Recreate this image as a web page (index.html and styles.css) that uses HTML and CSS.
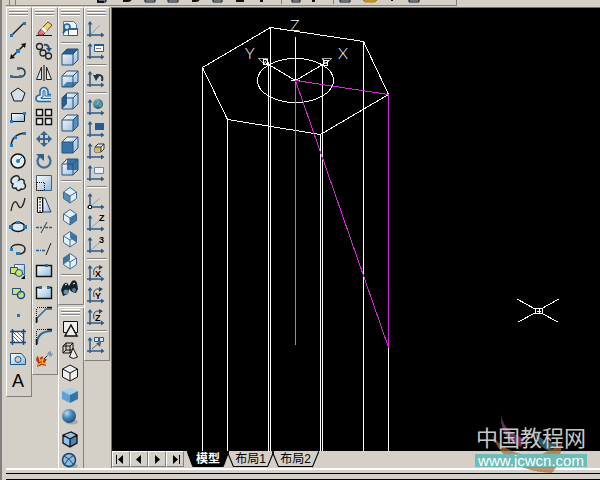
FILE: index.html
```html
<!DOCTYPE html>
<html lang="zh-CN">
<head>
<meta charset="utf-8">
<title>CAD</title>
<link rel="stylesheet" href="styles.css">
</head>
<body>
<svg class="defs" aria-hidden="true">
<defs>
<linearGradient id="glass" x1="0" y1="0" x2="1" y2="1"><stop offset="0" stop-color="#fff"/><stop offset="1" stop-color="#8fb8dc"/></linearGradient>
<radialGradient id="ball" cx=".35" cy=".3" r=".75"><stop offset="0" stop-color="#b8dcf4"/><stop offset=".45" stop-color="#4a8cc0"/><stop offset="1" stop-color="#1c4a7c"/></radialGradient>
<g id="axes"><path d="M5 4v15M2 17h16" stroke="#2c5a88" stroke-width="1.5" fill="none"/><path d="M2.500 6.500 5 3l2.500 3.500zM16 14.500l3.500 2.500-3.500 2.500z" fill="#2c5a88"/></g>
<g id="cube"><path d="M3 8 8 3h11v11l-5 5H3z" fill="url(#glass)"/></g>
<g id="cubeline"><path d="M3 8 8 3h11v11l-5 5H3zM3 8h11v11M14 8l5-5" fill="none" stroke="#23527f"/></g>
<g id="iso"><path d="M11 3.500 17.500 8v6.500L11 19l-6.500-4.500V8z" fill="#e4f1fa"/></g>
<g id="isoline"><path d="M11 3.500 17.500 8v6.500L11 19l-6.500-4.500V8zM4.500 8 11 12l6.500-4M11 12v7" fill="none" stroke="#3d6c98"/></g>
</defs>
</svg>
<header class="topbar">
<div class="topstrip">
<svg class="topicons" aria-hidden="true">
<path d="M3.500 0v5M9.500 0v5M275.500 0v4M327.500 0v4" stroke="#808080"/>
<path d="M92 0h8v2h-8zM139 0h10v2h-10zM162 0h10v2h-10zM207 0h9v2h-9zM286 0h8v2h-8zM334 0h10v2h-10zM403 0h10v2h-10z" fill="#b8d4e8" stroke="#111"/>
<path d="M92 0v2h6M117 1h5l3-1M186 1h4l3-1M230 1h8M254 1h3M306 1h3M386 0v1" fill="none" stroke="#111" stroke-width="2"/>
<path d="M357 0h14l-2 2h-10z" fill="#d8ac2c" stroke="#a47818"/>
</svg>
</div>
</header>
<main class="workspace">
<aside class="dock">
<div class="palette">
<div class="grip"></div>
<button aria-label="直线"><svg viewBox="0 0 22 22"><path d="M5 17 17 5" stroke="#222" stroke-width="1.500"/><path d="M3 16h3v3H3zM16 4h3v3h-3z" fill="#2878b8"/></svg></button>
<button aria-label="构造线"><svg viewBox="0 0 22 22"><path d="M5 17 17 5" stroke="#111" stroke-width="1.500"/><path d="m3 19 1-5 4 4zM19 3l-1 5-4-4z" fill="#111"/><path d="M9 9h4v4H9z" fill="#2878b8"/></svg></button>
<button aria-label="多段线"><svg viewBox="0 0 22 22"><path d="M4 15h9M11 6c9-1 9 9 2 9" fill="none" stroke="#234" stroke-width="1.500"/><path d="M3 13h3v3H3zM12 13h3v3h-3zM10 5h3v3h-3z" fill="#2878b8"/></svg></button>
<button aria-label="正多边形"><svg viewBox="0 0 22 22"><path d="m11 4 7 5-3 8H7L4 9z" fill="#d3e1eb" stroke="#111"/></svg></button>
<button aria-label="矩形"><svg viewBox="0 0 22 22"><path d="M4.500 7.500h13v8h-13z" fill="url(#glass)" stroke="#111"/><path d="M3 14h3v3H3zM16 6h3v3h-3z" fill="#2878b8"/></svg></button>
<button aria-label="圆弧"><svg viewBox="0 0 22 22"><path d="M4 18Q5 6 18 5" fill="none" stroke="#222" stroke-width="1.500"/><path d="M3 16h3v3H3zM7 8h3v3H7zM16 4h3v3h-3z" fill="#2878b8"/></svg></button>
<button aria-label="圆"><svg viewBox="0 0 22 22"><circle cx="11" cy="11" r="7" fill="#e6f1f8" stroke="#111" stroke-width="1.500"/><path d="m11 11 5-5" stroke="#2878b8"/><circle cx="11" cy="11" r="2" fill="#2878b8"/></svg></button>
<button aria-label="修订云线"><svg viewBox="0 0 22 22"><path d="M8 4c4-1 5 2 4 4 3-2 6 0 5 3 3 3 1 7-3 6-2 3-5 1-5-1-3 1-5-1-3-4-3-1-3-6 2-8z" fill="#dae8f1" stroke="#222" stroke-width="1.400"/></svg></button>
<button aria-label="样条曲线"><svg viewBox="0 0 22 22"><path d="M4 17C6 6 9 6 11 11s5 3 7-7" fill="none" stroke="#222" stroke-width="1.300"/></svg></button>
<button aria-label="椭圆"><svg viewBox="0 0 22 22"><ellipse cx="11" cy="11" rx="7" ry="4.500" fill="#dceaf4" stroke="#111" stroke-width="1.400"/><path d="M2 9h4v4H2zM16 9h4v4h-4zM9 5h4v3H9z" fill="#2878b8"/></svg></button>
<button aria-label="椭圆弧"><svg viewBox="0 0 22 22"><path d="M4 11c0-6 14-6 14 0 0 4-4 5-7 5" fill="none" stroke="#222" stroke-width="1.500"/><path d="M3 10h3v3H3zM9 14h4v3H9z" fill="#2878b8"/></svg></button>
<button aria-label="插入块"><svg viewBox="0 0 22 22"><path d="M7.500 4.500h10v10h-10z" fill="url(#glass)" stroke="#386a98"/><path d="M3.500 7.500h7v6h-7z" fill="#dce05c" stroke="#174e83"/><circle cx="12" cy="13" r="3.500" fill="#cce86c" stroke="#174e83"/><path d="M18 15v4h-4z"/></svg></button>
<button aria-label="创建块"><svg viewBox="0 0 22 22"><path d="M5.500 6.500h8v6h-8z" fill="#dce05c" stroke="#174e83"/><circle cx="14" cy="13" r="3.500" fill="#cce86c" fill-opacity=".7" stroke="#174e83" stroke-width="1.500"/></svg></button>
<button aria-label="点"><svg viewBox="0 0 22 22"><path d="M10 10h3v3h-3z" fill="#2878b8"/></svg></button>
<button aria-label="图案填充"><svg viewBox="0 0 22 22"><path d="M6 6h10v10H6z" fill="#fff"/><path d="m6 6 10 10M10 6l6 6M6 10l6 6M14 6l2 2M6 14l2 2" stroke="#3c7cac"/><path d="M5.500 3v16M16.500 3v16M3 5.500h16M3 16.500h16" stroke="#1c4870" stroke-width="1.500"/></svg></button>
<button aria-label="面域"><svg viewBox="0 0 22 22"><path d="M3.500 5.500h11l4 5v6h-15z" fill="url(#glass)" stroke="#20588c"/><circle cx="11" cy="11.500" r="3" fill="#d4d0c8" stroke="#20588c"/></svg></button>
<button class="letter" aria-label="多行文字">A</button>
</div>
<div class="palette">
<div class="grip"></div>
<button aria-label="删除"><svg viewBox="0 0 22 22"><path d="M3 17.500h16" stroke="#111"/><path d="m8 11 7-7 4 3-7 8z" fill="#efd374" stroke="#684c28"/><path d="m8 11 4 4-2 2H6l-1-2z" fill="#f07080" stroke="#782838"/><path d="m8 11 2-2 4 4-2 2z" fill="#fff"/></svg></button>
<button aria-label="复制"><svg viewBox="0 0 22 22"><g fill="#d4d0c8" stroke="#222" stroke-width="1.300"><circle cx="6.500" cy="6.500" r="3"/><circle cx="10" cy="13" r="3"/><circle cx="15.500" cy="16" r="3"/></g><path d="M11 5c3-1 5 1 5 4" fill="none" stroke="#23527f" stroke-width="2"/><path d="M13 8h6l-3 4z" fill="#23527f"/></svg></button>
<button aria-label="镜像"><svg viewBox="0 0 22 22"><path d="M8.500 5v12.500H3.500zM13.500 5v12.500h5z" fill="#dceaf4" stroke="#222"/><path d="M11 3v16" stroke="#111"/></svg></button>
<button aria-label="偏移"><svg viewBox="0 0 22 22"><path d="M18 17.500H6q-3 0-3-3t4-3.500V7q1-3.500 4-3.500T15 7v3.500h3" fill="#dceaf4" stroke="#25649c" stroke-width="1.500"/><path d="M18 14.500H8q-1-1 2-1.500V7q1-1.500 2 0v5h6" fill="none" stroke="#25649c"/></svg></button>
<button aria-label="阵列"><svg viewBox="0 0 22 22"><path d="M3.500 3.500h6v6h-6zM12.500 3.500h6v6h-6zM3.500 12.500h6v6h-6zM12.500 12.500h6v6h-6z" fill="#eee" stroke="#111" stroke-width="1.400"/></svg></button>
<button aria-label="移动"><svg viewBox="0 0 22 22"><path d="M11 6v10M6 11h10" stroke="#376695" stroke-width="2"/><path d="m11 3 4 4H7zM11 19l4-4H7zM3 11l4-4v8zM19 11l-4-4v8z" fill="#376695"/></svg></button>
<button aria-label="旋转"><svg viewBox="0 0 22 22"><path d="M7 6a6.500 6.500 0 1 0 8 0" fill="none" stroke="#426e98" stroke-width="2.300"/><path d="M3 4h8v7z" fill="#305f8d"/></svg></button>
<button aria-label="缩放"><svg viewBox="0 0 22 22"><path d="M3.500 3.500h15v15h-15z" fill="url(#glass)" stroke="#386088"/><path d="M4 10.500h7.500V19" fill="none" stroke="#111" stroke-dasharray="1 1"/><path d="M3.500 10v8.500H11" fill="none" stroke="#111" stroke-dasharray="1 1"/></svg></button>
<button aria-label="拉伸"><svg viewBox="0 0 22 22"><path d="M10 4h2l6 14h-8z" fill="url(#glass)" stroke="#234d76"/><path d="M4.500 3.500h5v15h-5z" fill="#fff" stroke="#111"/><path d="M7 4v14" stroke="#111" stroke-dasharray="2 1"/></svg></button>
<button aria-label="修剪"><svg viewBox="0 0 22 22"><path d="M3 11.500h6M12 11.500h8" stroke="#246090" stroke-width="1.500" stroke-dasharray="3 1"/><path d="m8 17 6-11" stroke="#333"/></svg></button>
<button aria-label="延伸"><svg viewBox="0 0 22 22"><path d="M3 12.500h5m1 0h4" stroke="#246090" stroke-width="1.500" stroke-dasharray="3 1"/><path d="m13 17 5-12" stroke="#222"/></svg></button>
<button aria-label="打断于点"><svg viewBox="0 0 22 22"><path d="M3.500 5.500h15v11h-15z" fill="url(#glass)" stroke="#111" stroke-width="1.400"/><path d="M12 4h3v3h-3z" fill="#286c9c"/></svg></button>
<button aria-label="打断"><svg viewBox="0 0 22 22"><path d="M6 5.500H3.500v11h15v-11H16" fill="url(#glass)" stroke="#111" stroke-width="1.400"/><path d="M6 4h3v3H6zM14 4h3v3h-3z" fill="#286c9c"/></svg></button>
<button aria-label="倒角"><svg viewBox="0 0 22 22"><path d="M4 18v-4l9-9h6" fill="none" stroke="#286c9c" stroke-width="1.500"/><path d="M3.500 19V13M14 3.500h5" stroke="#111" stroke-width="1.500"/><path d="M3.500 12V4M4 3.500h9" stroke="#111" stroke-dasharray="1 1"/></svg></button>
<button aria-label="圆角"><svg viewBox="0 0 22 22"><path d="M4 18q0-13 15-13" fill="none" stroke="#286c9c" stroke-width="2"/><path d="M3.500 19V13M14 3.500h5" stroke="#111" stroke-width="1.500"/><path d="M3.500 12V4M4 3.500h9" stroke="#111" stroke-dasharray="1 1"/></svg></button>
<button aria-label="分解"><svg viewBox="0 0 22 22"><path d="m4 8 3 2 2-2 2 3 3 0-2 3 1 4-4-1-5 2 1-4-2-3z" fill="#c82c18"/><path d="m6 9 1 4 3-2-1 4 4 1M5 17l3-2" fill="none" stroke="#f2bd20" stroke-width="1.300"/><path d="m11 11 4-4" stroke="#222"/><path d="m14 8 4-4M15 4l4 4M17 3v6M14 6h6" stroke="#789"/></svg></button>
</div>
<div class="stack">
<div class="palette">
<div class="grip"></div>
<button aria-label="命名视图"><svg viewBox="0 0 22 22"><path d="M4.500 3.500h10l3 3v11h-13z" fill="#eef6fc" stroke="#4b7ba6"/><circle cx="8" cy="9" r="3" fill="#bedef4" stroke="#286090" stroke-width="1.500"/><path d="m4 15 3-4" stroke="#225788" stroke-width="2"/><path d="M9.500 10.500h9v7h-9z" fill="#fff" stroke="#225788"/><path d="M9 10h10v2H9z" fill="#2868a0"/></svg></button>
<hr>
<button aria-label="俯视"><svg viewBox="0 0 22 22"><use href="#cube"/><path d="m3 8 5-5h11l-5 5z" fill="#275f94"/><use href="#cubeline"/></svg></button>
<button aria-label="仰视"><svg viewBox="0 0 22 22"><use href="#cube"/><path d="m3 19 5-5h11l-5 5z" fill="#4480b0"/><use href="#cubeline"/></svg></button>
<button aria-label="左视"><svg viewBox="0 0 22 22"><use href="#cube"/><path d="m3 8 5-5v11l-5 5z" fill="#275f94"/><use href="#cubeline"/></svg></button>
<button aria-label="右视"><svg viewBox="0 0 22 22"><use href="#cube"/><path d="m14 8 5-5v11l-5 5z" fill="#5790c0"/><use href="#cubeline"/></svg></button>
<button aria-label="主视"><svg viewBox="0 0 22 22"><use href="#cube"/><path d="M3 8h11v11H3z" fill="#3974a8"/><use href="#cubeline"/></svg></button>
<button aria-label="后视"><svg viewBox="0 0 22 22"><use href="#cube"/><path d="M8 3h11v11H8z" fill="#3974a8"/><use href="#cubeline"/></svg></button>
<hr>
<button aria-label="西南等轴测"><svg viewBox="0 0 22 22"><use href="#iso"/><path d="m4.500 8 6.500 4v7l-6.500-4.500z" fill="#568dbc"/><use href="#isoline"/></svg></button>
<button aria-label="东南等轴测"><svg viewBox="0 0 22 22"><use href="#iso"/><path d="m17.500 8-6.500 4v7l6.500-4.500z" fill="#3f78a8"/><use href="#isoline"/></svg></button>
<button aria-label="东北等轴测"><svg viewBox="0 0 22 22"><use href="#iso"/><path d="m11 3.500 6.500 4.500v6.500L11 10z" fill="#3f78a8"/><use href="#isoline"/></svg></button>
<button aria-label="西北等轴测"><svg viewBox="0 0 22 22"><use href="#iso"/><path d="M11 3.500 4.500 8v6.500L11 10z" fill="#3f78a8"/><use href="#isoline"/></svg></button>
<hr>
<button aria-label="相机"><svg viewBox="0 0 22 22"><path d="M4 7q3-4 5-1l1 2 3-5q4-2 5 2l1 6-2 4-4-1-3-3-1 5-5 2-2-6z" fill="#15202b"/><circle cx="7" cy="14" r="2.500" fill="#6090b4"/><circle cx="15" cy="12" r="2" fill="#527ca0"/><path d="m6 7 2-1M14 6l2-1" stroke="#fff"/></svg></button>
</div>
<div class="palette grow">
<div class="grip"></div>
<button aria-label="二维线框"><svg viewBox="0 0 22 22"><path d="M4.500 3.500h14v11h-14z" fill="#eee" stroke="#111"/><path d="m12 7 6 11H6z" fill="#eee" stroke="#111" stroke-width="1.500"/></svg></button>
<button aria-label="三维线框"><svg viewBox="0 0 22 22"><path d="m4 6 3-3h7v7l-3 3H4zM4 6h7v7M11 6l3-3M7 3v7h7M7 10l-3 3" fill="none" stroke="#111"/><path d="m14 8 4.500 9q-4 3-8 0z" fill="#eee" stroke="#111"/></svg></button>
<button aria-label="消隐"><svg viewBox="0 0 22 22"><path d="m11 3 7.500 4v8L11 19l-7.500-4V7z" fill="#eee" stroke="#111"/><path d="m3.500 7 7.500 4 7.500-4M11 11v8" fill="none" stroke="#111"/></svg></button>
<button aria-label="平面着色"><svg viewBox="0 0 22 22"><path d="m3 7 8-3 8 3-8 4z" fill="#9cd1f2"/><path d="m3 7 8 4v8l-8-4z" fill="#61a1d3"/><path d="m19 7-8 4v8l8-4z" fill="#3572a8"/></svg></button>
<button aria-label="体着色"><svg viewBox="0 0 22 22"><ellipse cx="13" cy="16" rx="6" ry="2.500" fill="#a8a8a4"/><circle cx="10" cy="10" r="7" fill="url(#ball)"/></svg></button>
<button aria-label="带边框平面着色"><svg viewBox="0 0 22 22"><path d="m4 8 8-4 6 3v8l-7 4-7-4z" fill="#8cc4ea"/><path d="m11 11 7-4v8l-7 4z" fill="#4c84b4"/><path d="m4 7 8-3 6 3v8l-7 4-7-4zM4 7l7 4 7-4M11 11v8" fill="none" stroke="#111" stroke-width="1.300"/></svg></button>
<button aria-label="带边框体着色"><svg viewBox="0 0 22 22"><ellipse cx="13" cy="16" rx="6" ry="2.500" fill="#a8a8a4"/><circle cx="10" cy="10" r="6.500" fill="#8cbce0" stroke="#1c4468" stroke-width="1.500"/><path d="M5 6q5 2 10 9M15 5q-6 3-10 10" fill="none" stroke="#1c4468"/></svg></button>
</div>
</div>
<div class="palette">
<div class="grip"></div>
<button aria-label="UCS"><svg viewBox="0 0 22 22"><use href="#axes"/><path d="m6 16 9-9" stroke="#8ca4b8"/></svg></button>
<button aria-label="命名 UCS"><svg viewBox="0 0 22 22"><use href="#axes"/><path d="M9.500 4.500h9v7h-9z" fill="#fff" stroke="#275f94"/><path d="M9 4h10v2H9z" fill="#275f94"/><path d="M11 8.500h5" stroke="#777"/></svg></button>
<hr>
<button aria-label="上一个 UCS"><svg viewBox="0 0 22 22"><use href="#axes"/><path d="M17 13q2-7-6-6" fill="none" stroke="#26384e" stroke-width="2"/><path d="M8 7h7l-4 6z" fill="#26384e"/></svg></button>
<hr>
<button aria-label="世界 UCS"><svg viewBox="0 0 22 22"><use href="#axes"/><circle cx="13" cy="8" r="5" fill="url(#ball)"/><path d="m10 4 3 1-1 3-3 1zM14 8l3-2 0 4-3 2z" fill="#55a45b"/></svg></button>
<button aria-label="对象 UCS"><svg viewBox="0 0 22 22"><use href="#axes"/><path d="M10 5h9v7h-9z" fill="#245c94"/></svg></button>
<button aria-label="面 UCS"><svg viewBox="0 0 22 22"><use href="#axes"/><path d="m10 7 3-3h6v5l-3 3h-6z" fill="#eee" stroke="#333"/><path d="M10 7h6v5h-6z" fill="#d5bd50"/><path d="M10 7h6v5m0-5 3-3" fill="none" stroke="#333"/></svg></button>
<button aria-label="视图 UCS"><svg viewBox="0 0 22 22"><use href="#axes"/><path d="M9.500 5.500h9v6h-9z" fill="#e6f2fa" stroke="#5e8bae"/></svg></button>
<hr>
<button aria-label="原点 UCS"><svg viewBox="0 0 22 22"><use href="#axes"/><path d="m6 16 9-8" stroke="#8ca4b8"/><path d="M3.500 15.500h3v3h-3z" fill="#fff" stroke="#111"/></svg></button>
<button aria-label="Z 轴矢量"><svg viewBox="0 0 22 22"><use href="#axes"/><path d="m6 16 9-8" stroke="#8ca4b8"/><text x="14" y="9">Z</text></svg></button>
<button aria-label="三点"><svg viewBox="0 0 22 22"><use href="#axes"/><path d="m6 16 9-8" stroke="#8ca4b8"/><text x="14" y="9">3</text></svg></button>
<hr>
<button aria-label="X"><svg viewBox="0 0 22 22"><use href="#axes"/><path d="M9 13q-2-9 6-8" fill="none" stroke="#345"/><path d="m14 3 4 2-4 3z" fill="#345"/><text x="10" y="15">X</text></svg></button>
<button aria-label="Y"><svg viewBox="0 0 22 22"><use href="#axes"/><path d="M9 13q-2-9 6-8" fill="none" stroke="#345"/><path d="m14 3 4 2-4 3z" fill="#345"/><text x="10" y="15">Y</text></svg></button>
<button aria-label="Z"><svg viewBox="0 0 22 22"><use href="#axes"/><path d="M9 13q-2-9 6-8" fill="none" stroke="#345"/><path d="m14 3 4 2-4 3z" fill="#345"/><text x="10" y="15">Z</text></svg></button>
<hr>
<button aria-label="应用 UCS"><svg viewBox="0 0 22 22"><use href="#axes"/><path d="M9.500 3.500h4v4h-4zM14.500 3.500h4v4h-4z" fill="#cfe8f8" stroke="#245c94"/><path d="m7 15 7-6" stroke="#567"/><path d="m11 9 5-1-1 5z" fill="#456"/></svg></button>
</div>
</aside>
<section class="view">
<div class="canvas">
<svg class="drawing" role="img" aria-label="模型空间">
<g transform="translate(-112 -8)" fill="none" stroke="#fff" shape-rendering="crispEdges">
<path d="M202.500 67.500 270.500 27.500 363.500 41.500 388.500 94.500 320.500 134.500 227.500 119.500z"/>
<path d="M202.500 67V460M227.500 119V460M268.500 62V460M270.500 28V460M320.500 134V460M322.500 64V460M363.500 42V460M388.500 347V460"/>
<ellipse cx="295.500" cy="80.500" rx="38" ry="22"/>
<path d="M295.500 37V80M295.500 80.500 263.500 61.500M295.500 80.500 329.500 60.500M291 80.500h9"/>
<path d="m258 58 10 0-4 6zM332 58l-10 0 4 6z" stroke="#aaa"/>
<path d="M263 59h4v5h-4zM323 60h4v5h-4z"/>
<path d="M295.500 81V345" stroke="#20e038"/>
<path d="M295.500 80.500 388.500 94.500V347.500z" stroke="#d02cd0"/>
<path d="m517 299 18 10M559 299l-18 10M518 322l17-9M558 322l-17-9M535.500 308.500h7v5h-7zM537 311h4M539 309v5"/>
</g>
<g class="axis-names" transform="translate(-112 -8)"><text x="290" y="31">Z</text><text x="245" y="59">Y</text><text x="338" y="59">X</text></g>
</svg>
</div>
<nav class="sheets">
<button class="step" aria-label="第一个"><svg viewBox="0 0 16 14"><path d="M3 3h1v9H3zM10 3v9L5 7.500z"/></svg></button>
<button class="step" aria-label="上一个"><svg viewBox="0 0 16 14"><path d="M10 3v9L5 7.500z"/></svg></button>
<button class="step" aria-label="下一个"><svg viewBox="0 0 16 14"><path d="M6 3v9l5-4.500z"/></svg></button>
<button class="step" aria-label="最后一个"><svg viewBox="0 0 16 14"><path d="M6 3v9l5-4.500zM12 3h1v9h-1z"/></svg></button>
<div class="tabs">
<button class="tab active"><svg viewBox="0 0 44 16" preserveAspectRatio="none"><path d="M0 0h44l-6 15.500H6z"/></svg><span>模型</span></button>
<button class="tab"><svg viewBox="0 0 44 16" preserveAspectRatio="none"><path d="M0 0l6 15.500h32L44 0"/></svg><span>布局1</span></button>
<button class="tab"><svg viewBox="0 0 44 16" preserveAspectRatio="none"><path d="M0 0l6 15.500h32L44 0"/></svg><span>布局2</span></button>
</div>
</nav>
</section>
</main>
<footer class="command"><div class="prompt"></div></footer>
<div class="mark">
<svg class="swoosh" viewBox="0 0 112 60" aria-hidden="true"><path d="M26 0q2 16 24 24l-4 8Q25 24 26 0z" fill="#62305a"/><path d="M60 17q5 9 22 12l-8 7Q61 30 60 17z" fill="#285c68"/><path d="M17 20q15 21 46 21l24-12q-3 22-10 29-47-2-60-38z" fill="#a8682c" opacity=".7"/></svg>
<div class="mark-name">中国教程网</div>
<div class="mark-url">www.jcwcn.com</div>
</div>
</body>
</html>
```

FILE: styles.css
```css
* { box-sizing: border-box; }
body {
  margin: 0;
  height: 100vh;
  display: flex;
  flex-direction: column;
  overflow: hidden;
  position: relative;
  background: #d4d0c8;
  border-left: 2px solid #808080;
  font-family: "Liberation Sans", "Noto Sans CJK SC", sans-serif;
  font-size: 12px;
}
button {
  margin: 0;
  padding: 0;
  border: 0;
  background: none;
  font: inherit;
  color: #000;
}
svg { display: block; }
.defs { position: absolute; width: 0; height: 0; }
.topbar { height: 7px; flex: none; padding-left: 4px; }
.topstrip {
  width: 76%;
  height: 6px;
  border-right: 1px solid #808080;
  border-bottom: 1px solid #808080;
  overflow: hidden;
}
.topicons { width: 100%; height: 5px; }
.workspace { flex: 1; min-height: 0; display: flex; }
.dock { display: flex; align-items: flex-start; padding-left: 4px; height: 100%; }
.stack { display: flex; flex-direction: column; gap: 2px; height: 100%; }
.palette {
  display: flex;
  flex-direction: column;
  width: 26px;
  padding: 0 2px 4px 0;
  border: 1px solid #808080;
  border-top-color: #fff;
  border-left-color: #fff;
}
.grow { flex: 1; min-height: 0; overflow: hidden; border-bottom: 0; padding-bottom: 0; }
.grip {
  flex: none;
  height: 7px;
  margin: 1px 1px 2px 2px;
  border: solid #fff;
  border-width: 1px 0;
  background: linear-gradient(#d4d0c8 1px, #808080 1px, #808080 2px, #fff 2px, #fff 3px, #d4d0c8 3px, #d4d0c8 4px, #808080 4px);
}
.palette button { flex: none; width: 22px; height: 22px; }
.palette svg { width: 22px; height: 22px; }
.palette text { font-size: 9px; font-weight: bold; }
.palette .letter { font-size: 18px; line-height: 22px; }
hr {
  flex: none;
  width: 20px;
  height: 2px;
  margin: 2px 0 2px 2px;
  border: 0;
  border-top: 1px solid #808080;
  background: #fff;
}
.view {
  flex: 1;
  min-width: 0;
  display: flex;
  flex-direction: column;
  border: solid #707070;
  border-width: 1px 0 0 1px;
  margin-left: 1px;
}
.canvas { flex: 1; min-height: 0; background: #000; overflow: hidden; }
.drawing { width: 100%; height: 100%; }
.axis-names { fill: #fff; font-family: Lato, sans-serif; font-weight: 300; font-size: 16px; }
.sheets { display: flex; flex: none; height: 17px; padding-bottom: 1px; }
.step {
  width: 18px;
  padding: 0;
  border: 1px solid #808080;
  border-top-color: #fff;
  border-left-color: #fff;
}
.step svg { width: 16px; height: 14px; }
.tabs { display: flex; margin-left: 3px; }
.tab { position: relative; width: 47px; height: 16px; margin-right: -2px; line-height: 14px; }
.tab svg { position: absolute; inset: 0; width: 100%; height: 100%; fill: none; stroke: #000; }
.tab span { position: relative; }
.tab.active { width: 42px; color: #fff; font-weight: bold; }
.tab.active svg { fill: #000; }
.command {
  flex: none;
  height: 12px;
  margin-left: 4px;
  border-top: 2px solid #fff;
  display: flex;
  flex-direction: column;
}
.prompt {
  flex: 1;
  margin-top: 3px;
  border-top: 1px solid #000;
  background: linear-gradient(#d4d0c8 5px, #000 5px);
}
.mark { position: absolute; right: 13px; bottom: 13px; width: 112px; }
.swoosh { position: absolute; left: 0; bottom: -8px; width: 112px; height: 60px; }
.mark-name { position: relative; padding-bottom: 4px; font-family: "Noto Sans CJK SC", sans-serif; font-size: 22px; line-height: 28px; color: #c8c8c8; text-align: center; white-space: nowrap; }
.mark-url { position: relative; background: #6cbcb8; color: #fff; font-size: 15px; line-height: 13px; text-align: center; }
```
